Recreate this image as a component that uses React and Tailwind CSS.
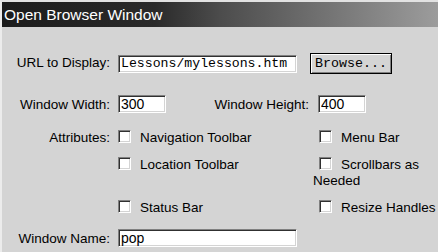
import React from 'react';

const sunken =
  'border-t border-l border-t-[#808080] border-l-[#808080] border-b border-r border-b-white border-r-white shadow-[inset_1px_1px_0_#303030,inset_-1px_-1px_0_#d4d4d4] bg-white';

function Field({ value, width, mono }) {
  return (
    <input
      readOnly
      defaultValue={value}
      className={`${sunken} h-[18px] ${width} pl-[2px] outline-none text-black ${
        mono ? "font-['Liberation_Mono','Courier_New',monospace] text-[13.2px]" : 'text-[14px]'
      }`}
    />
  );
}

function Check({ children }) {
  return (
    <div className="whitespace-normal">
      <span className={`${sunken} inline-block align-[-1px] ml-[6px] mr-[9px] w-[13px] h-[13px]`} />
      {children}
    </div>
  );
}

export default function App() {
  return (
    <div className="w-[438px] h-[252px] overflow-hidden bg-[#d4d4d4] border-t-2 border-t-[#e2e2e2] border-l-2 border-l-[#ececec] font-['Liberation_Sans',Arial,sans-serif] text-[13.5px] text-black">
      {/* Title */}
      <div className="h-[25px] flex items-center pl-[2px] text-white text-[15.5px] bg-[linear-gradient(to_right,#1c1c1c_0%,#2a2a2a_35%,#4c4c4c_50%,#9c9c9c_100%)]">
        Open Browser Window
      </div>

      {/* URL */}
      <div className="mt-[26px] h-[21px] flex items-center">
        <div className="w-[108px] text-right">URL to Display:</div>
        <div className="ml-[8px]">
          <Field value="Lessons/mylessons.htm" width="w-[179px]" mono />
        </div>
        <button className="ml-[13px] h-[21px] w-[82px] border border-black bg-[#d4d4d4] shadow-[inset_1px_1px_0_#fff,inset_-1px_-1px_0_#808080] font-['Liberation_Mono','Courier_New',monospace] text-[13.3px] leading-none">
          Browse...
        </button>
      </div>

      {/* Size */}
      <div className="mt-[22px] h-[18px] flex items-center">
        <div className="w-[108px] text-right">Window Width:</div>
        <div className="ml-[8px]">
          <Field value="300" width="w-[48px]" />
        </div>
        <div className="w-[143px] text-right">Window Height:</div>
        <div className="ml-[9px]">
          <Field value="400" width="w-[48px]" />
        </div>
      </div>

      {/* Attributes */}
      <div className="mt-[16px] flex leading-[16px]">
        <div className="w-[108px] text-right">Attributes:</div>
        <div className="ml-[2px] grid grid-cols-[201px_125px] gap-y-[11px]">
          <Check>Navigation Toolbar</Check>
          <Check>Menu Bar</Check>
          <Check>Location Toolbar</Check>
          <Check>Scrollbars as Needed</Check>
          <Check>Status Bar</Check>
          <Check>Resize Handles</Check>
        </div>
      </div>

      {/* Name */}
      <div className="mt-[14px] h-[18px] flex items-center">
        <div className="w-[108px] text-right">Window Name:</div>
        <div className="ml-[8px]">
          <Field value="pop" width="w-[179px]" />
        </div>
      </div>
    </div>
  );
}
